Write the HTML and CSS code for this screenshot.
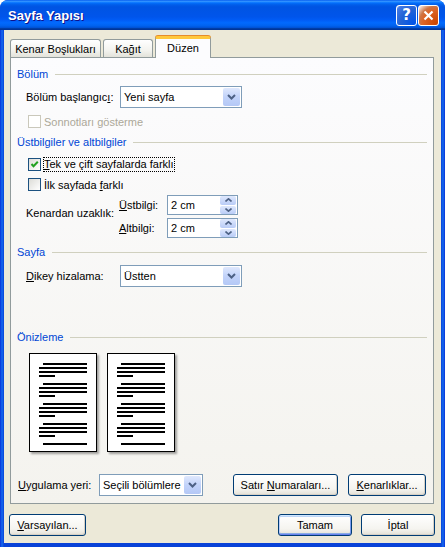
FILE: index.html
```html
<!DOCTYPE html>
<html lang="tr">

<head>
    <meta charset="UTF-8">
    <meta name="viewport" content="width=device-width, initial-scale=1.0">
    <title>Sayfa Yapısı</title>
    <link rel="stylesheet" href="styles.css">
</head>

<body>
    <div class="window">
        <div class="titlebar">
            <span class="title">Sayfa Yapısı</span>
            <div class="title-buttons">
                <span class="tbtn help">?</span>
                <span class="tbtn close">
                    <svg width="11" height="11" viewBox="0 0 11 11">
                        <path d="M1.5 1.5 L9.5 9.5 M9.5 1.5 L1.5 9.5" stroke="#fff" stroke-width="2.2" />
                    </svg>
                </span>
            </div>
        </div>

        <div class="client">
            <div class="tabs">
                <div class="tab tab-margins">Kenar Boşlukları</div>
                <div class="tab tab-paper">Kağıt</div>
                <div class="tab tab-layout active">Düzen</div>
            </div>

            <div class="panel">
                <div class="group group-section"><span>Bölüm</span></div>
                <div class="row row-start">
                    <span class="label label-wide">Bölüm başlangıc<u>ı</u>:</span>
                    <div class="combo combo-wide">
                        <span class="value">Yeni sayfa</span>
                        <span class="drop">
                            <svg width="9" height="6" viewBox="0 0 9 6">
                                <path d="M1 1 L4.5 4.5 L8 1" fill="none" stroke="#4d6185" stroke-width="2" />
                            </svg>
                        </span>
                    </div>
                </div>
                <div class="check check-endnotes disabled">
                    <span class="box"></span>
                    <span class="check-text">Sonnotları gösterme</span>
                </div>

                <div class="group group-headers"><span>Üstbilgiler ve altbilgiler</span></div>
                <div class="check check-odd">
                    <span class="box checked">
                        <svg width="11" height="11" viewBox="0 0 11 11">
                            <path d="M2.5 5 L4.5 7.2 L8.8 2.8" fill="none" stroke="#21a121" stroke-width="2" />
                        </svg>
                    </span>
                    <span class="check-text focused"><u>T</u>ek ve çift sayfalarda farklı</span>
                </div>
                <div class="check check-first">
                    <span class="box"></span>
                    <span class="check-text">İlk sayfada <u>f</u>arklı</span>
                </div>
                <div class="row row-distance">
                    <span class="label label-wide distance-label">Kenardan uzaklık:</span>
                    <div class="spins">
                        <div class="spin-row">
                            <span class="label label-spin"><u>Ü</u>stbilgi:</span>
                            <div class="spin">
                                <span class="value">2 cm</span>
                                <span class="arrows">
                                    <span class="arrow">
                                        <svg width="7" height="4" viewBox="0 0 7 4">
                                            <path d="M0.5 3.5 L3.5 0.8 L6.5 3.5" fill="none" stroke="#4d6185" stroke-width="1.6" />
                                        </svg>
                                    </span>
                                    <span class="arrow">
                                        <svg width="7" height="4" viewBox="0 0 7 4">
                                            <path d="M0.5 0.5 L3.5 3.2 L6.5 0.5" fill="none" stroke="#4d6185" stroke-width="1.6" />
                                        </svg>
                                    </span>
                                </span>
                            </div>
                        </div>
                        <div class="spin-row">
                            <span class="label label-spin"><u>A</u>ltbilgi:</span>
                            <div class="spin">
                                <span class="value">2 cm</span>
                                <span class="arrows">
                                    <span class="arrow">
                                        <svg width="7" height="4" viewBox="0 0 7 4">
                                            <path d="M0.5 3.5 L3.5 0.8 L6.5 3.5" fill="none" stroke="#4d6185" stroke-width="1.6" />
                                        </svg>
                                    </span>
                                    <span class="arrow">
                                        <svg width="7" height="4" viewBox="0 0 7 4">
                                            <path d="M0.5 0.5 L3.5 3.2 L6.5 0.5" fill="none" stroke="#4d6185" stroke-width="1.6" />
                                        </svg>
                                    </span>
                                </span>
                            </div>
                        </div>
                    </div>
                </div>

                <div class="group group-page"><span>Sayfa</span></div>
                <div class="row row-align">
                    <span class="label label-wide"><u>D</u>ikey hizalama:</span>
                    <div class="combo combo-wide">
                        <span class="value">Üstten</span>
                        <span class="drop">
                            <svg width="9" height="6" viewBox="0 0 9 6">
                                <path d="M1 1 L4.5 4.5 L8 1" fill="none" stroke="#4d6185" stroke-width="2" />
                            </svg>
                        </span>
                    </div>
                </div>

                <div class="group group-preview"><span>Önizleme</span></div>
                <div class="pages">
                    <div class="page">
                        <div class="para"><div class="line indent"></div><div class="line"></div><div class="line"></div><div class="line short"></div></div>
                        <div class="para"><div class="line indent"></div><div class="line"></div><div class="line"></div><div class="line short"></div></div>
                        <div class="para"><div class="line indent"></div><div class="line"></div><div class="line"></div><div class="line short"></div></div>
                        <div class="para"><div class="line indent"></div><div class="line"></div><div class="line"></div><div class="line short"></div></div>
                        <div class="para"><div class="line indent"></div></div>
                    </div>
                    <div class="page">
                        <div class="para"><div class="line indent"></div><div class="line"></div><div class="line"></div><div class="line short"></div></div>
                        <div class="para"><div class="line indent"></div><div class="line"></div><div class="line"></div><div class="line short"></div></div>
                        <div class="para"><div class="line indent"></div><div class="line"></div><div class="line"></div><div class="line short"></div></div>
                        <div class="para"><div class="line indent"></div><div class="line"></div><div class="line"></div><div class="line short"></div></div>
                        <div class="para"><div class="line indent"></div></div>
                    </div>
                </div>

                <div class="row row-apply">
                    <span class="label label-apply"><u>U</u>ygulama yeri:</span>
                    <div class="combo combo-apply">
                        <span class="value">Seçili bölümlere</span>
                        <span class="drop">
                            <svg width="9" height="6" viewBox="0 0 9 6">
                                <path d="M1 1 L4.5 4.5 L8 1" fill="none" stroke="#4d6185" stroke-width="2" />
                            </svg>
                        </span>
                    </div>
                    <button class="btn btn-lines">Satır <u>N</u>umaraları...</button>
                    <button class="btn btn-borders"><u>K</u>enarlıklar...</button>
                </div>
            </div>

            <div class="footer">
                <button class="btn btn-default-set"><u>V</u>arsayılan...</button>
                <div class="footer-right">
                    <button class="btn btn-ok default">Tamam</button>
                    <button class="btn btn-cancel">İptal</button>
                </div>
            </div>
        </div>
    </div>
</body>

</html>
```

FILE: styles.css
```css
* {
    box-sizing: border-box;
}

body {
    margin: 0;
    font-family: "Liberation Sans", Arial, sans-serif;
    font-size: 11px;
    color: #000;
    background: #fff;
}

u {
    text-decoration: underline;
    text-underline-offset: 1px;
}

.window {
    width: 445px;
    height: 547px;
    display: flex;
    flex-direction: column;
    background: linear-gradient(to right, #0831d9 0, #166aee 2px, #0842d8 4px, #0842d8 441px, #166aee 443px, #0831d9 445px);
    border-radius: 8px 8px 0 0;
}

/* title bar */
.titlebar {
    height: 30px;
    flex: none;
    display: flex;
    align-items: center;
    justify-content: space-between;
    padding: 0 6px 0 8px;
    border-radius: 8px 8px 0 0;
    background: linear-gradient(to bottom, #0058ee 0%, #3593ff 4%, #288eff 6%, #127dff 8%, #036ffc 10%, #0262ee 14%, #0057e5 20%, #0054e3 24%, #0055eb 56%, #005bf5 66%, #026afe 76%, #0062ef 86%, #0052d6 92%, #0040ab 94%, #003092 100%);
}

.title {
    color: #fff;
    font-weight: bold;
    font-size: 13px;
    text-shadow: 1px 1px #0f1089;
}

.title-buttons {
    display: flex;
    gap: 1px;
}

.tbtn {
    width: 21px;
    height: 21px;
    border: 1px solid #fff;
    border-radius: 3px;
    display: flex;
    align-items: center;
    justify-content: center;
}

.help {
    background: radial-gradient(circle at 90% 90%, #0054e9 0%, #2263d5 55%, #4479e4 90%, #ffffff 100%);
    color: #fff;
    font-weight: bold;
    font-size: 15px;
    font-family: "DejaVu Sans", sans-serif;
}

.close {
    background: radial-gradient(circle at 90% 90%, #cc4600 0%, #dc6527 55%, #cd7546 70%, #ffffff 100%);
}

/* client area */
.client {
    flex: 1;
    margin: 0 4px 4px;
    background: #ece9d8;
    padding-top: 6px;
}

.tabs {
    display: flex;
    align-items: flex-end;
    height: 21px;
    margin-left: 6px;
    position: relative;
    z-index: 1;
}

.tab {
    height: 18px;
    margin-right: 2px;
    border: 1px solid #919b9c;
    border-bottom: none;
    border-radius: 3px 3px 0 0;
    background: linear-gradient(#fff, #f3f3ef 60%, #e3e2da);
    display: flex;
    align-items: center;
    justify-content: center;
}

.tab-margins {
    width: 91px;
}

.tab-paper {
    width: 50px;
}

.tab-layout {
    width: 56px;
}

.tab.active {
    height: 22px;
    margin-bottom: -1px;
    background: #fcfcfe;
    border-top: 3px solid #ffc83c;
    box-shadow: 0 -1px 0 #e68b2c;
    padding-bottom: 2px;
}

.panel {
    width: 424px;
    height: 447px;
    margin-left: 6px;
    border: 1px solid #919b9c;
    background: linear-gradient(#fcfcfe, #f4f3ee);
    padding: 0 6px;
    display: flex;
    flex-direction: column;
}

/* group headers */
.group {
    height: 14px;
    display: flex;
    align-items: center;
    color: #0046d5;
}

.group::after {
    content: "";
    flex: 1;
    height: 1px;
    margin-left: 7px;
    background: #d0d0bf;
}

.group-section {
    margin-top: 9px;
}

.group-headers {
    margin-top: 7px;
}

.group-page {
    margin-top: 7px;
}

.group-preview {
    margin-top: 43px;
}

/* rows */
.row {
    display: flex;
    align-items: center;
}

.row-start {
    margin-top: 5px;
    padding-left: 9px;
}

.row-align {
    margin-top: 6px;
    padding-left: 9px;
}

.row-distance {
    margin-top: 4px;
    padding-left: 9px;
}

.row-apply {
    margin-top: 22px;
    padding-left: 1px;
}

.label-wide {
    width: 94px;
}

.distance-label {
    width: 93px;
    margin-top: -7px;
}

.label-spin {
    width: 48px;
}

.label-apply {
    width: 81px;
}

/* combo box */
.combo {
    height: 22px;
    border: 1px solid #7f9db9;
    background: #fff;
    display: flex;
    align-items: center;
    justify-content: space-between;
}

.combo-wide {
    width: 122px;
}

.combo-apply {
    width: 104px;
}

.combo .value,
.spin .value {
    padding-left: 3px;
}

.drop {
    width: 17px;
    height: 18px;
    margin-right: 1px;
    border-radius: 2px;
    background: linear-gradient(#dfe8fd, #c2d3fa 50%, #b4c8f6);
    display: flex;
    align-items: center;
    justify-content: center;
}

/* spinner */
.spins {
    display: flex;
    flex-direction: column;
    gap: 3px;
}

.spin-row {
    display: flex;
    align-items: center;
}

.spin {
    width: 71px;
    height: 20px;
    border: 1px solid #7f9db9;
    background: #fff;
    display: flex;
    align-items: center;
    justify-content: space-between;
}

.arrows {
    width: 16px;
    height: 18px;
    margin-right: 1px;
    display: flex;
    flex-direction: column;
    gap: 1px;
}

.arrow {
    flex: 1;
    border-radius: 2px;
    background: linear-gradient(#dfe8fd, #b9ccf7);
    display: flex;
    align-items: center;
    justify-content: center;
}

/* check boxes */
.check {
    height: 13px;
    padding-left: 11px;
    display: flex;
    align-items: center;
}

.check-endnotes {
    margin-top: 7px;
}

.check-odd {
    margin-top: 9px;
}

.check-first {
    margin-top: 7px;
}

.box {
    width: 13px;
    height: 13px;
    flex: none;
    border: 1px solid #1c5180;
    background: linear-gradient(135deg, #dcdcd7, #fff);
    display: flex;
    align-items: center;
    justify-content: center;
}

.check-text {
    margin-left: 3px;
}

.check-text.focused {
    margin-left: 2px;
    border: 1px dotted #000;
    line-height: 13px;
}

.disabled .box {
    border-color: #cac8bb;
    background: #fff;
}

.disabled .check-text {
    color: #aca899;
}

/* preview */
.pages {
    margin-top: 9px;
    padding-left: 12px;
    display: flex;
    gap: 10px;
}

.page {
    width: 68px;
    height: 99px;
    border: 1px solid #000;
    background: #fff;
    box-shadow: 2px 2px 2px rgba(0, 0, 0, 0.35);
    padding: 9px 0 0 9px;
}

.para {
    margin-bottom: 6px;
}

.line {
    width: 48px;
    height: 2px;
    margin-bottom: 2px;
    background: #000;
}

.line.indent {
    width: 44px;
    margin-left: 4px;
}

.line.short {
    width: 16px;
}

/* buttons */
.btn {
    height: 22px;
    padding: 0;
    border: 1px solid #003c74;
    border-radius: 3px;
    background: linear-gradient(#fff, #f5f4ef 70%, #e3e0d6);
    box-shadow: inset -1px -1px 0 #d6d0c5;
    font-family: "Liberation Sans", Arial, sans-serif;
    font-size: 11px;
    color: #000;
}

.btn-lines {
    width: 105px;
    margin-left: 30px;
}

.btn-borders {
    width: 78px;
    margin-left: 10px;
}

.btn.default {
    box-shadow: inset 0 1px 0 #cee7ff, inset 0 -1px 0 #6982ee, inset 1px 0 0 #bccff9, inset -1px 0 0 #7a9cee, inset 0 2px 0 #bcd4f6, inset 0 -2px 0 #89ade4;
}

.footer {
    margin-top: 10px;
    padding: 0 6px 0 5px;
    display: flex;
    justify-content: space-between;
}

.footer-right {
    display: flex;
    gap: 9px;
}

.btn-default-set {
    width: 77px;
}

.btn-ok,
.btn-cancel {
    width: 74px;
}
```
